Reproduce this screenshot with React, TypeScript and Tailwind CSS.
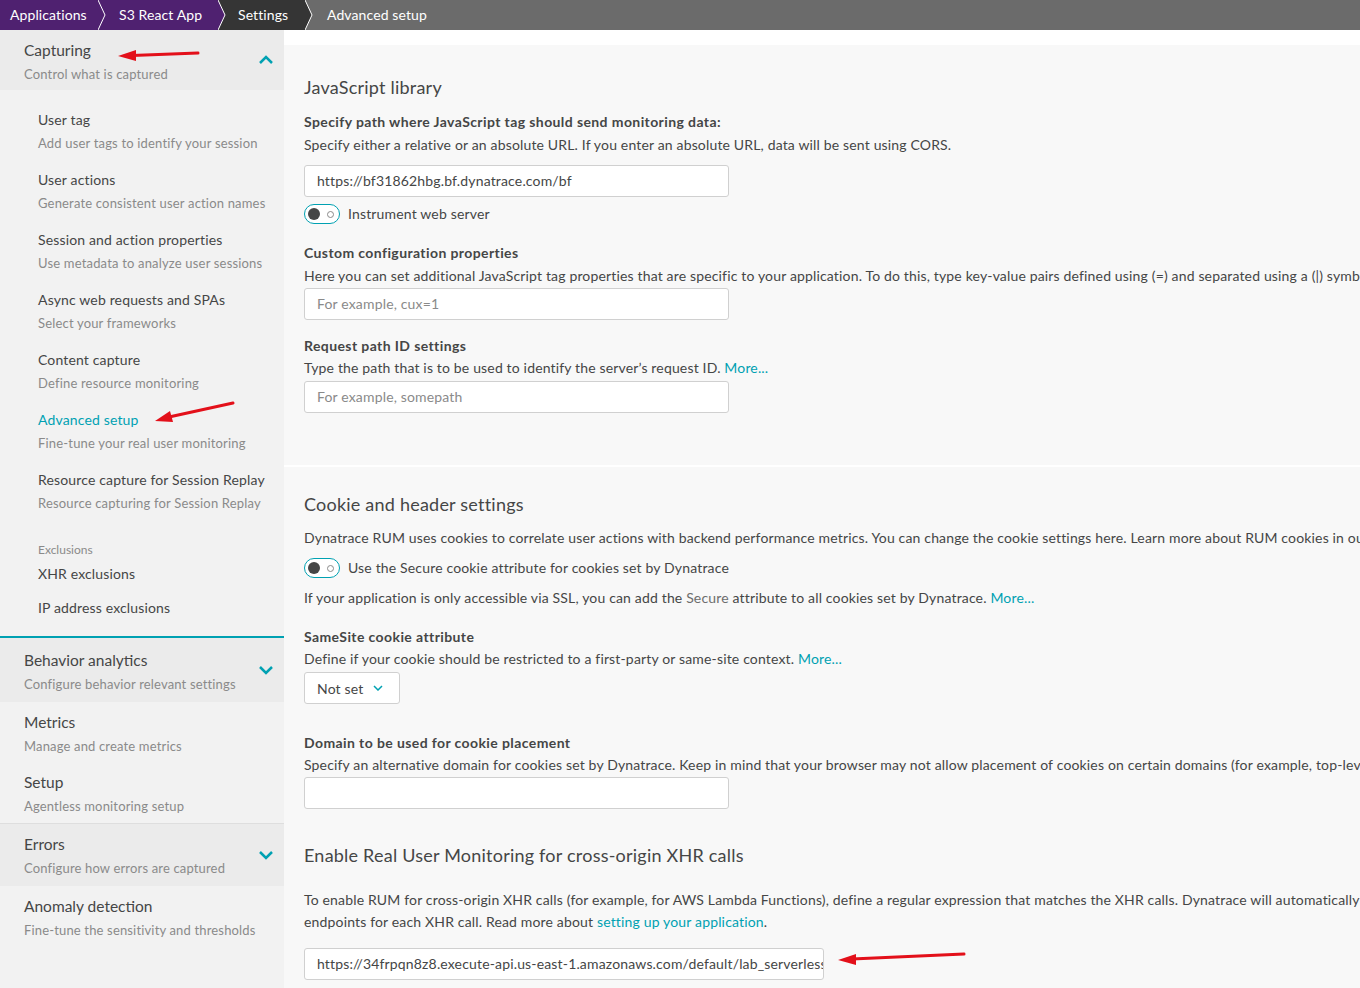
import React from "react";

const font = { fontFamily: "Lato, 'Open Sans', 'Liberation Sans', sans-serif" };

const captureItems = [
  { title: "User tag", sub: "Add user tags to identify your session" },
  { title: "User actions", sub: "Generate consistent user action names" },
  { title: "Session and action properties", sub: "Use metadata to analyze user sessions" },
  { title: "Async web requests and SPAs", sub: "Select your frameworks" },
  { title: "Content capture", sub: "Define resource monitoring" },
  { title: "Advanced setup", sub: "Fine-tune your real user monitoring", active: true },
  { title: "Resource capture for Session Replay", sub: "Resource capturing for Session Replay" },
];

function Chevron({ up }: { up?: boolean }) {
  return (
    <svg width="16" height="10" viewBox="0 0 16 10" className="shrink-0">
      <polyline
        points={up ? "2,8 8,2 14,8" : "2,2 8,8 14,2"}
        fill="none"
        stroke="#00a1b2"
        strokeWidth="2.5"
      />
    </svg>
  );
}

function Sep({ from, to }: { from: string; to: string }) {
  return (
    <svg width="8" height="30" viewBox="0 0 8 30" className="shrink-0 block">
      <rect width="8" height="30" fill={to} />
      <polygon points="0,0 7,15 0,30" fill={from} />
      <polyline points="0,0 7,15 0,30" fill="none" stroke="#ffffff" strokeWidth="1" />
    </svg>
  );
}

function Crumbs() {
  return (
    <div className="flex h-[30px] text-[14px] tracking-[0.1px] text-white leading-[30px] shrink-0">
      <div className="w-[98px] bg-[#4f2170] pl-[10px]">Applications</div>
      <Sep from="#4f2170" to="#4f2170" />
      <div className="w-[112px] bg-[#4f2170] pl-[13px]">S3 React App</div>
      <Sep from="#4f2170" to="#353535" />
      <div className="w-[79px] bg-[#353535] pl-[12px]">Settings</div>
      <Sep from="#353535" to="#6b6b6b" />
      <div className="flex-1 bg-[#6b6b6b] pl-[14px]">Advanced setup</div>
    </div>
  );
}

function GroupHeader({ title, sub, up, h, pt }: { title: string; sub: string; up?: boolean; h: string; pt: string }) {
  return (
    <div className={`flex items-center justify-between bg-[#ebebeb] pl-6 pr-[10px] ${h}`}>
      <div className={`self-start ${pt}`}>
        <div className="text-[15.5px] leading-[20px] text-[#454646]">{title}</div>
        <div className="text-[13px] leading-[18px] tracking-[0.16px] text-[#8a8a8a] mt-[5px]">{sub}</div>
      </div>
      <Chevron up={up} />
    </div>
  );
}

function PlainItem({ title, sub }: { title: string; sub: string }) {
  return (
    <div className="pl-6">
      <div className="text-[15.5px] leading-[20px] text-[#454646]">{title}</div>
      <div className="text-[13px] leading-[18px] tracking-[0.16px] text-[#8a8a8a] mt-[5px]">{sub}</div>
    </div>
  );
}

function Sidebar() {
  return (
    <div className="w-[284px] shrink-0 bg-[#f2f2f2] flex flex-col">
      <GroupHeader title="Capturing" sub="Control what is captured" up h="h-[60px]" pt="pt-[10px]" />
      <div className="pl-[38px] pt-5 flex flex-col gap-[18px]">
        {captureItems.map((it) => (
          <div key={it.title}>
            <div className={`text-[14px] leading-[20px] tracking-[0.15px] ${it.active ? "text-[#00a1b2]" : "text-[#454646]"}`}>{it.title}</div>
            <div className="text-[13px] leading-[18px] tracking-[0.18px] text-[#8a8a8a] mt-1">{it.sub}</div>
          </div>
        ))}
      </div>
      <div className="pl-[38px] mt-[30px]">
        <div className="text-[12px] leading-[16px] text-[#8a8a8a]">Exclusions</div>
        <div className="text-[14px] leading-[20px] tracking-[0.15px] text-[#454646] mt-[6px]">XHR exclusions</div>
        <div className="text-[14px] leading-[20px] tracking-[0.15px] text-[#454646] mt-[14px]">IP address exclusions</div>
      </div>
      <div className="h-[2px] bg-[#00a1b2] mt-[18px]" />
      <GroupHeader title="Behavior analytics" sub="Configure behavior relevant settings" h="h-[64px]" pt="pt-[12px]" />
      <div className="pt-[10px] pb-[8px] flex flex-col gap-[17px]">
        <PlainItem title="Metrics" sub="Manage and create metrics" />
        <PlainItem title="Setup" sub="Agentless monitoring setup" />
      </div>
      <div className="h-px bg-[#dedede]" />
      <GroupHeader title="Errors" sub="Configure how errors are captured" h="h-[62px]" pt="pt-[10px]" />
      <div className="pt-[10px]">
        <PlainItem title="Anomaly detection" sub="Fine-tune the sensitivity and thresholds" />
      </div>
    </div>
  );
}

function Toggle() {
  return (
    <div className="w-9 h-5 rounded-full border-[1.5px] border-[#00a1b2] bg-white flex items-center justify-between pl-[3px] pr-[5px] shrink-0">
      <div className="w-3 h-3 rounded-full bg-[#454646]" />
      <div className="w-[7px] h-[7px] rounded-full border border-[#8a8a8a]" />
    </div>
  );
}

function Field({ value, placeholder, w = "w-[425px]" }: { value?: string; placeholder?: string; w?: string }) {
  return (
    <div className={`${w} h-8 bg-white border border-[#d0d0d0] rounded-[3px] pl-3 text-[14px] tracking-[0.16px] leading-[30px] whitespace-nowrap overflow-hidden`}>
      {value ? <span className="text-[#454646]">{value}</span> : <span className="text-[#8a8a8a]">{placeholder}</span>}
    </div>
  );
}

const label = "text-[14px] leading-[20px] font-bold tracking-[0.4px] text-[#454646] whitespace-nowrap";
const desc = "text-[14px] leading-[20px] tracking-[0.16px] text-[#454646] whitespace-nowrap";
const h2 = "text-[18px] leading-[24px] tracking-[0.22px] text-[#454646] whitespace-nowrap";

function Main() {
  return (
    <div className="flex-1 min-w-0 bg-white pt-[15px] overflow-hidden flex flex-col">
      <div className="h-[420px] bg-[#f8f8f8] pl-5 pt-[30px]">
        <div className={h2}>JavaScript library</div>
        <div className={`${label} mt-[13px]`}>Specify path where JavaScript tag should send monitoring data:</div>
        <div className={`${desc} mt-[3px]`}>
          Specify either a relative or an absolute URL. If you enter an absolute URL, data will be sent using CORS.
        </div>
        <div className="mt-[10px]">
          <Field value="https://bf31862hbg.bf.dynatrace.com/bf" />
        </div>
        <div className="flex items-center gap-2 mt-[7px]">
          <Toggle />
          <span className={desc}>Instrument web server</span>
        </div>
        <div className={`${label} mt-[19px]`}>Custom configuration properties</div>
        <div className={`${desc} mt-[3px]`}>
          Here you can set additional JavaScript tag properties that are specific to your application. To do this, type key-value pairs defined using (=) and separated using a (|) symbol.
        </div>
        <div className="mt-[2px]">
          <Field placeholder="For example, cux=1" />
        </div>
        <div className={`${label} mt-4`}>Request path ID settings</div>
        <div className={`${desc} mt-[2px]`}>
          Type the path that is to be used to identify the server’s request ID. <span className="text-[#00a1b2]">More...</span>
        </div>
        <div className="mt-[3px]">
          <Field placeholder="For example, somepath" />
        </div>
      </div>
      <div className="flex-1 mt-[2px] bg-[#f8f8f8] pl-5 pt-[25px]">
        <div className={h2}>Cookie and header settings</div>
        <div className={`${desc} mt-3`}>
          Dynatrace RUM uses cookies to correlate user actions with backend performance metrics. You can change the cookie settings here. Learn more about RUM cookies in our documentation.
        </div>
        <div className="flex items-center gap-2 mt-[10px]">
          <Toggle />
          <span className={desc}>Use the Secure cookie attribute for cookies set by Dynatrace</span>
        </div>
        <div className={`${desc} mt-[10px]`}>
          If your application is only accessible via SSL, you can add the <span className="text-[#6d6d6d]">Secure</span> attribute to all cookies set by Dynatrace.{" "}
          <span className="text-[#00a1b2]">More...</span>
        </div>
        <div className={`${label} mt-[19px]`}>SameSite cookie attribute</div>
        <div className={`${desc} mt-[2px]`}>
          Define if your cookie should be restricted to a first-party or same-site context. <span className="text-[#00a1b2]">More...</span>
        </div>
        <div className="mt-[3px] w-[96px] h-8 bg-white border border-[#d0d0d0] rounded-[3px] pl-3 flex items-center gap-[10px] text-[14px] tracking-[0.16px] text-[#454646]">
          <span>Not set</span>
          <svg width="10" height="6" viewBox="0 0 10 6">
            <polyline points="1,1 5,5 9,1" fill="none" stroke="#00a1b2" strokeWidth="1.5" />
          </svg>
        </div>
        <div className={`${label} mt-[29px]`}>Domain to be used for cookie placement</div>
        <div className={`${desc} mt-[2px]`}>
          Specify an alternative domain for cookies set by Dynatrace. Keep in mind that your browser may not allow placement of cookies on certain domains (for example, top-level domains).
        </div>
        <div className="mt-[2px]">
          <Field />
        </div>
        <div className={`${h2} mt-[34px]`}>Enable Real User Monitoring for cross-origin XHR calls</div>
        <div className="mt-[22px] text-[14px] leading-[22px] tracking-[0.16px] text-[#454646]">
          <div className="whitespace-nowrap">
            To enable RUM for cross-origin XHR calls (for example, for AWS Lambda Functions), define a regular expression that matches the XHR calls. Dynatrace will automatically add the required headers to the
          </div>
          <div className="whitespace-nowrap">
            endpoints for each XHR call. Read more about <span className="text-[#00a1b2]">setting up your application</span>.
          </div>
        </div>
        <div className="mt-[15px]">
          <Field value="https://34frpqn8z8.execute-api.us-east-1.amazonaws.com/default/lab_serverless" w="w-[520px] pr-3" />
        </div>
      </div>
    </div>
  );
}

function Arrows() {
  const red = "#e3101a";
  return (
    <svg className="absolute inset-0 pointer-events-none" width="1360" height="988" viewBox="0 0 1360 988">
      <line x1="198" y1="53" x2="132" y2="55.5" stroke={red} strokeWidth="3" strokeLinecap="round" />
      <polygon points="118,56 136,50 136,61" fill={red} />
      <line x1="233" y1="403" x2="169" y2="417" stroke={red} strokeWidth="3" strokeLinecap="round" />
      <polygon points="155,421 170,411 173,422" fill={red} />
      <line x1="964" y1="954" x2="852" y2="959" stroke={red} strokeWidth="3" strokeLinecap="round" />
      <polygon points="838,960 856,954 856,965" fill={red} />
    </svg>
  );
}

export default function App() {
  return (
    <div className="relative w-[1360px] h-[988px] overflow-hidden flex flex-col bg-white" style={font}>
      <Crumbs />
      <div className="flex flex-1 min-h-0">
        <Sidebar />
        <Main />
      </div>
      <Arrows />
    </div>
  );
}
